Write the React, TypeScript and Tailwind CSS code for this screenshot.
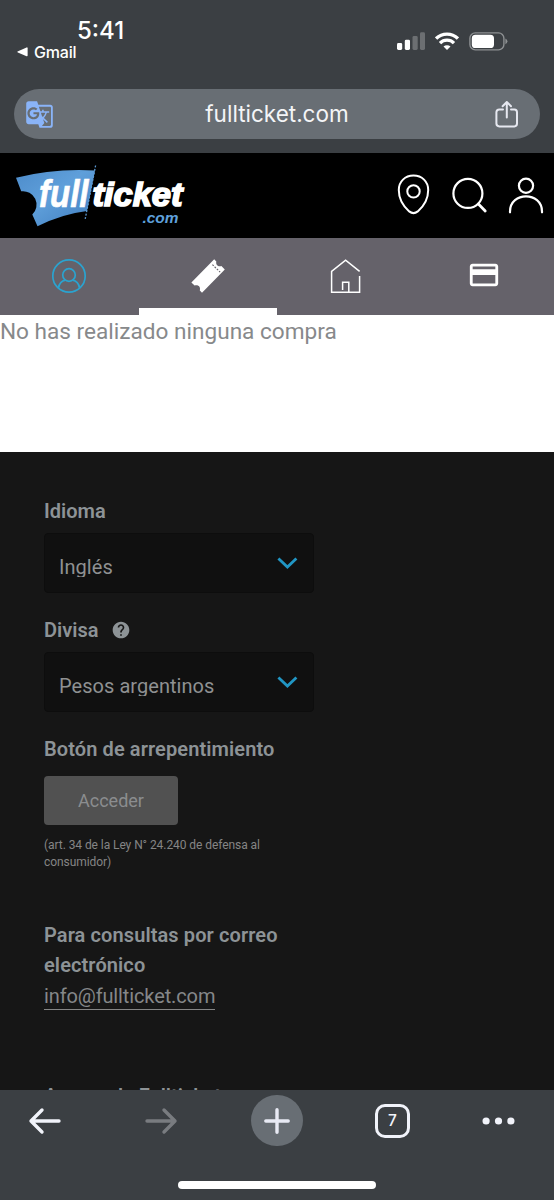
import { MdCreditCard, MdGTranslate, MdHelp } from "react-icons/md";

const StatusBar = () => {
    return (
        <div className="flex h-[89px] justify-between pl-[17px] pr-[46px] font-['Inter'] text-white">
            <div className="flex flex-col pt-[18px]">
                <span className="pl-[60px] text-[24px] leading-[26px] font-medium">5:41</span>
                <span className="flex items-center gap-[6px] text-[16px] leading-[16px] font-medium">
                    <svg width="11" height="10" viewBox="0 0 11 10" fill="white">
                        <path d="M0.5 4.6 L9.6 0.4 Q10.6 0.2 10.6 1.2 V8.6 Q10.6 9.6 9.6 9.3 L0.8 5.4 Q0 5 0.5 4.6Z" />
                    </svg>
                    <span className="tracking-[-0.2px]">Gmail</span>
                </span>
            </div>

            <div className="flex gap-[10px] pt-[32px]">
                <svg width="28" height="19" viewBox="0 0 28 19" fill="white">
                    <rect x="0" y="11" width="5.2" height="7" rx="1.4" />
                    <rect x="7.8" y="7.7" width="5.2" height="10.3" rx="1.4" />
                    <rect x="15.5" y="4" width="5.2" height="14" rx="1.4" opacity=".25" />
                    <rect x="23" y="0.3" width="5" height="17.7" rx="1.4" opacity=".25" />
                </svg>
                <svg width="24" height="19" viewBox="0 0 24 19" fill="none" stroke="white" strokeWidth="3.3">
                    <path d="M1.1 6.6 A15.6 15.6 0 0 1 22.9 6.6" />
                    <path d="M5 11.1 A9.8 9.8 0 0 1 19 11.1" />
                    <path d="M12 18 L8.5 14.6 A5 5 0 0 1 15.5 14.6 Z" fill="white" stroke="none" />
                </svg>
                <svg width="39" height="19" viewBox="0 0 39 19">
                    <rect x="0.9" y="0.9" width="34" height="17" rx="5.4" fill="none" stroke="#8d9092" strokeWidth="1.4" />
                    <rect x="2.8" y="2.8" width="22.2" height="13.2" rx="3.6" fill="white" />
                    <path d="M36.4 6.4 Q38.4 7.2 38.4 9.3 Q38.4 11.4 36.4 12.2Z" fill="#8d9092" />
                </svg>
            </div>
        </div>
    );
};

const AddressBar = () => {
    return (
        <div className="mx-[14px] flex h-[50px] items-center justify-between rounded-full bg-[#686e74] pr-[21px] pl-[11px]">
            <MdGTranslate size={29} className="text-[#8ab4f8]" />
            <span className="pl-[5px] font-['Inter'] text-[22.5px] leading-[28px] text-[#f4f5f7]">fullticket.com</span>
            <svg width="24" height="28" viewBox="0 0 24 28" fill="none" stroke="#e6e8f0" strokeWidth="2" strokeLinecap="round" strokeLinejoin="round">
                <path d="M8 9.5 H4.4 Q1.4 9.5 1.4 12.3 V23.6 Q1.4 26.4 4.4 26.4 H19.4 Q22 26.4 22 23.6 V12.3 Q22 9.5 19.4 9.5 H16" />
                <path d="M11.8 17.4 V2 M7.6 6.2 L11.8 2 L16 6.2" />
            </svg>
        </div>
    );
};

const Logo = () => {
    return (
        <svg width="190" height="85" viewBox="0 153 190 85">
            <defs>
                <linearGradient id="ticket" x1="0" y1="0" x2="1" y2="1">
                    <stop offset="0" stopColor="#4d8ccb" />
                    <stop offset=".45" stopColor="#5f9fda" />
                    <stop offset="1" stopColor="#3f7dbf" />
                </linearGradient>
            </defs>
            <path d="M16 177.7 Q54 168 95 170.4 L87 211 Q62 214 37.5 226.3 L32.3 214.5 A13.5 13.5 0 0 0 21.2 191.3 Z" fill="url(#ticket)" />
            <path d="M95.6 165.5 L85 220" stroke="#5c99d3" strokeWidth="1.3" strokeDasharray="2 1.5" />
            <g fill="white" stroke="white" fontFamily="Liberation Sans" fontStyle="italic" fontWeight="700">
                <text x="39" y="207" fontSize="38" strokeWidth="0.7" textLength="49.5" lengthAdjust="spacingAndGlyphs">full</text>
                <text x="92.5" y="206.3" fontSize="33.5" strokeWidth="1.7" textLength="90" lengthAdjust="spacingAndGlyphs">ticket</text>
            </g>
            <text x="142.5" y="222.9" fill="#5fa0dc" fontFamily="Liberation Sans" fontStyle="italic" fontWeight="700" fontSize="15.5" textLength="36" lengthAdjust="spacingAndGlyphs">.com</text>
        </svg>
    );
};

const Header = () => {
    return (
        <header className="flex h-[85px] items-start justify-between bg-black pr-[10px]">
            <Logo />
            <div className="flex pt-[21px]">
                <svg className="mr-[22px]" width="33" height="42" viewBox="0 0 33 42" fill="none" stroke="white" strokeWidth="2">
                    <path d="M16.5 1.6 C8 1.6 1.8 7.6 1.8 16 C1.8 25 6.7 32.6 12.2 37.4 Q16.5 40.8 20.8 37.4 C26.3 32.6 31.2 25 31.2 16 C31.2 7.6 25 1.6 16.5 1.6Z" />
                    <circle cx="16.5" cy="17.4" r="6.2" />
                </svg>
                <svg className="mr-[20px]" width="36" height="42" viewBox="0 0 36 42" fill="none" stroke="white" strokeLinecap="round">
                    <circle cx="15.9" cy="19.4" r="14.5" strokeWidth="2.2" />
                    <path d="M26.4 30 L33.2 36.9" strokeWidth="2.8" />
                </svg>
                <svg width="36" height="42" viewBox="0 0 36 42" fill="none" stroke="white" strokeWidth="2.2" strokeLinecap="round">
                    <circle cx="18" cy="11.8" r="7.1" />
                    <path d="M2 38.3 V37.5 C2 17.2 34 17.2 34 37.5 V38.3" />
                </svg>
            </div>
        </header>
    );
};

const Tabs = () => {
    return (
        <nav className="grid h-[77px] grid-cols-4 bg-[#65626a]">
            <div className="flex justify-center pt-[20px]">
                <svg width="36" height="36" viewBox="0 0 36 36" fill="none" stroke="#2ba3cf" strokeWidth="1.7">
                    <circle cx="18" cy="18" r="16.2" />
                    <circle cx="18" cy="17" r="6.3" />
                    <path d="M7.4 30 C8.2 25.6 10.6 22.8 14.4 22.1 M28.6 30 C27.8 25.6 25.4 22.8 21.6 22.1" />
                </svg>
            </div>
            <div className="flex justify-center border-b-[7px] border-white pt-[20px]">
                <svg width="36" height="36" viewBox="0 0 36 36">
                    <path d="M1.4 24.6 L24.2 1.3 L26.3 3.4 C25.6 6.8 28 8.8 31.4 8 L34.8 11.4 L12 34.8 L9.8 32.4 C10.8 29 8.4 26.4 4.6 27.6 Z" fill="white" />
                    <path d="M22.4 6.6 L30.2 14.2" stroke="#65626a" strokeWidth="1.1" strokeDasharray="1.8 1.3" />
                </svg>
            </div>
            <div className="flex justify-center pt-[20px]">
                <svg width="36" height="36" viewBox="0 0 36 36" fill="none" stroke="white" strokeWidth="1.5">
                    <path d="M31.6 13.4 L17.6 2.2 L3.6 13.4 V34.2 H31.6 V18" />
                    <path d="M14.6 32 V24.2 H20.8 V34" />
                </svg>
            </div>
            <div className="flex justify-center pt-[20px] pr-px">
                <MdCreditCard size={34} className="text-white" />
            </div>
        </nav>
    );
};

const Select = ({ value }: { value: string }) => {
    return (
        <div className="flex h-[60px] w-[270px] shrink-0 items-start justify-between rounded-[4px] border border-[#0d0d0d] bg-[#101010] pr-[15px] pl-[14px]">
            <span className="mt-[19px] h-[24px] overflow-hidden text-[20px] leading-[28px] tracking-[0.05px] text-[#8f9192]">{value}</span>
            <svg className="mt-[22px]" width="22" height="14" viewBox="0 0 22 14" fill="none" stroke="#2196c4" strokeWidth="2.8">
                <path d="M2.4 2.4 L11.4 11 L20.4 2.4" />
            </svg>
        </div>
    );
};

const Footer = () => {
    return (
        <footer className="flex h-[638px] flex-col items-start overflow-hidden bg-[#161616] pt-[44px] pl-[44px] text-[20px] text-[#8d9396] *:shrink-0">
            <h4 className="h-[37px] leading-[30px] font-semibold">Idioma</h4>
            <Select value="Inglés" />

            <h4 className="mt-[22px] flex h-[37px] gap-[13px] leading-[30px] font-semibold">
                Divisa
                <MdHelp size={20} className="mt-[5px]" />
            </h4>
            <Select value="Pesos argentinos" />

            <h4 className="mt-[22px] h-[42px] leading-[30px] font-semibold tracking-[0.1px]">Botón de arrepentimiento</h4>
            <button className="h-[49px] w-[134px] rounded-[4px] bg-[#515151] text-[18px] text-[#8b8d8f]">Acceder</button>
            <p className="mt-[12px] w-[240px] text-[12px] leading-[17px] tracking-[-0.07px] text-[#858585]">
                (art. 34 de la Ley N° 24.240 de defensa al consumidor)
            </p>

            <h4 className="mt-[49px] w-[260px] leading-[30px] font-semibold tracking-[0.1px]">Para consultas por correo electrónico</h4>
            <a className="mt-[2px] h-[28px] border-b border-[#858585] leading-[28px] tracking-[-0.12px] text-[#858789]">info@fullticket.com</a>

            <h4 className="mt-[71px] leading-[30px] font-semibold">Acerca de Fullticket</h4>
        </footer>
    );
};

const Toolbar = () => {
    return (
        <div className="flex h-[110px] flex-col items-center bg-[#3b3f43]">
            <div className="flex h-[61px] w-full items-center pl-[28px]">
                <svg width="34" height="30" viewBox="0 0 34 30" fill="none" stroke="#f1f3fa" strokeWidth="3.4" strokeLinecap="round" strokeLinejoin="round">
                    <path d="M31 15 H3 M14 4 L3 15 L14 26" />
                </svg>
                <svg className="ml-[82px]" width="34" height="30" viewBox="0 0 34 30" fill="none" stroke="#797c80" strokeWidth="3.4" strokeLinecap="round" strokeLinejoin="round">
                    <path d="M3 15 H31 M20 4 L31 15 L20 26" />
                </svg>
                <div className="ml-[73px] flex h-[51px] w-[52px] items-center justify-center rounded-full bg-[#686e74]">
                    <svg width="28" height="28" viewBox="0 0 28 28" stroke="#e8eaf4" strokeWidth="3.4" strokeLinecap="round">
                        <path d="M14 2.8 V25.2 M2.8 14 H25.2" />
                    </svg>
                </div>
                <span className="ml-[72px] flex h-[34px] w-[35px] items-center justify-center rounded-[10px] border-[3px] border-[#f1f3fa] font-['Inter'] text-[15.5px] font-medium text-[#f1f3fa]">7</span>
                <svg className="ml-[72px]" width="33" height="8" viewBox="0 0 33 8" fill="#f1f3fa">
                    <circle cx="4.1" cy="4" r="3.6" />
                    <circle cx="16.5" cy="4" r="3.6" />
                    <circle cx="28.9" cy="4" r="3.6" />
                </svg>
            </div>
            <div className="mt-[30px] h-[8px] w-[198px] rounded-full bg-white"></div>
        </div>
    );
};

export default function App() {
    return (
        <div className="h-[1200px] w-[554px] overflow-hidden bg-white font-['Roboto',sans-serif]">
            <div className="h-[153px] bg-[#3b3f43]">
                <StatusBar />
                <AddressBar />
            </div>
            <Header />
            <Tabs />
            <main className="h-[137px] text-[22.6px] leading-[34px] text-[#87898b]">No has realizado ninguna compra</main>
            <Footer />
            <Toolbar />
        </div>
    );
}
